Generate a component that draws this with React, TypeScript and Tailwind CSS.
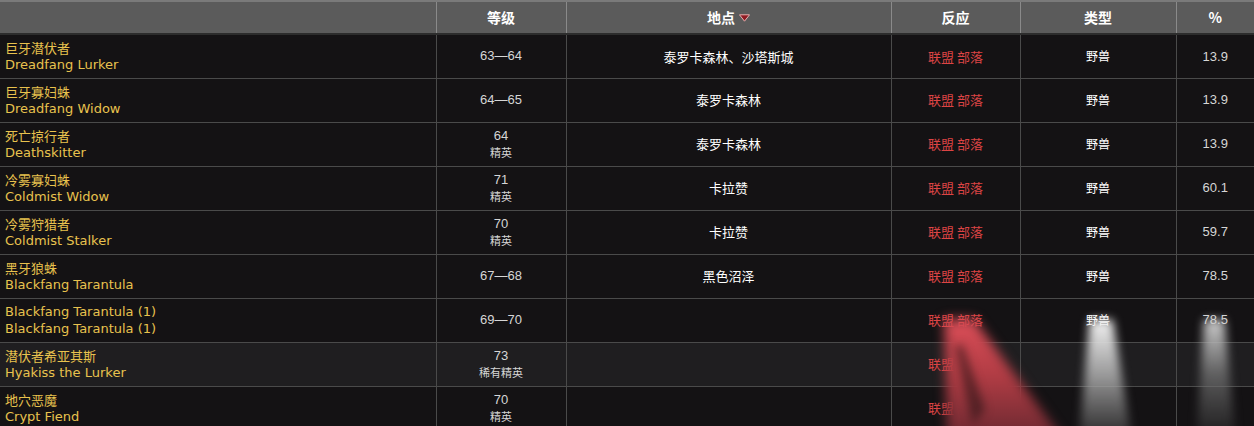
import React from "react";

type Row = {
  cn: string;
  en: string;
  level: string;
  tag?: string;
  zone?: string;
  reaction?: string;
  kind?: string;
  pct?: string;
  hl?: boolean;
};

const rows: Row[] = [
  { cn: "巨牙潜伏者", en: "Dreadfang Lurker", level: "63—64", zone: "泰罗卡森林、沙塔斯城", reaction: "联盟 部落", kind: "野兽", pct: "13.9" },
  { cn: "巨牙寡妇蛛", en: "Dreadfang Widow", level: "64—65", zone: "泰罗卡森林", reaction: "联盟 部落", kind: "野兽", pct: "13.9" },
  { cn: "死亡掠行者", en: "Deathskitter", level: "64", tag: "精英", zone: "泰罗卡森林", reaction: "联盟 部落", kind: "野兽", pct: "13.9" },
  { cn: "冷雾寡妇蛛", en: "Coldmist Widow", level: "71", tag: "精英", zone: "卡拉赞", reaction: "联盟 部落", kind: "野兽", pct: "60.1" },
  { cn: "冷雾狩猎者", en: "Coldmist Stalker", level: "70", tag: "精英", zone: "卡拉赞", reaction: "联盟 部落", kind: "野兽", pct: "59.7" },
  { cn: "黑牙狼蛛", en: "Blackfang Tarantula", level: "67—68", zone: "黑色沼泽", reaction: "联盟 部落", kind: "野兽", pct: "78.5" },
  { cn: "Blackfang Tarantula (1)", en: "Blackfang Tarantula (1)", level: "69—70", reaction: "联盟 部落", kind: "野兽", pct: "78.5" },
  { cn: "潜伏者希亚其斯", en: "Hyakiss the Lurker", level: "73", tag: "稀有精英", reaction: "联盟 部落", hl: true },
  { cn: "地穴恶魔", en: "Crypt Fiend", level: "70", tag: "精英", reaction: "联盟 部落" },
];

const cjk = "font-['Noto_Sans_CJK_SC',sans-serif]";
const latin = "font-['DejaVu_Sans','Noto_Sans_CJK_SC',sans-serif]";
const arial = "font-['Liberation_Sans','Noto_Sans_CJK_SC',sans-serif]";

function SortArrow() {
  return (
    <svg width="11" height="8" viewBox="0 0 11 8" className="ml-1 inline-block">
      <path d="M0.5 0.8 L10.5 0.8 L5.5 7.2 Z" fill="#8e1a22" stroke="#e8b0b0" strokeWidth="1" />
    </svg>
  );
}

export default function App() {
  const th = "h-[33px] border-l border-[#8a8a8a] text-center text-[14px] font-bold text-white";
  const td = "h-[44px] border-l border-b border-[#4a4a4a] text-center align-middle";

  return (
    <div className="relative h-[426px] w-[1254px] overflow-hidden bg-[#141214]">
      <table className="w-[1254px] table-fixed border-collapse">
        <colgroup>
          <col className="w-[436px]" />
          <col className="w-[130px]" />
          <col className="w-[325px]" />
          <col className="w-[129px]" />
          <col className="w-[156px]" />
          <col />
        </colgroup>
        <thead>
          <tr className={`border-t-2 border-[#7a7a7a] border-b-2 border-b-[#2c2c2c] bg-[#5b5b5b] ${cjk}`}>
            <th className="h-[33px] text-left" />
            <th className={th}>等级</th>
            <th className={th}>
              <span className="inline-flex items-center">
                地点
                <SortArrow />
              </span>
            </th>
            <th className={th}>反应</th>
            <th className={th}>类型</th>
            <th className={th}>%</th>
          </tr>
        </thead>
        <tbody>
          {rows.map((r, i) => (
            <tr key={i} className={r.hl ? "bg-[#1f1e20]" : "bg-[#141214]"}>
              <td className="h-[44px] border-b border-[#4a4a4a] pl-[5px] text-left align-middle text-[13px] leading-[17px] text-[#e8c24e]">
                <div className={r.cn.startsWith("Black") ? latin : cjk}>{r.cn}</div>
                <div className={latin}>{r.en}</div>
              </td>
              <td className={td}>
                <div className={`${arial} text-[13px] leading-[16px] text-[#d6d6d6]`}>{r.level}</div>
                {r.tag && <div className={`${cjk} text-[11px] leading-[16px] text-[#d6d6d6]`}>{r.tag}</div>}
              </td>
              <td className={`${td} ${cjk} text-[13px] text-white`}>{r.zone}</td>
              <td className={`${td} ${cjk} text-[13px] text-[#dc4444]`}>{r.reaction}</td>
              <td className={`${td} ${cjk} text-[12px] text-white`}>{r.kind}</td>
              <td className={`${td} ${arial} text-[13px] text-[#d6d6d6]`}>{r.pct}</td>
            </tr>
          ))}
        </tbody>
      </table>

      {/* light beams over the lower right corner */}
      <div className="pointer-events-none absolute left-[928px] top-[314px] h-[125px] w-[135px] blur-[6px]">
        <div className="h-full w-full bg-gradient-to-b from-[#e0505a] via-[#b03c44] to-[#6a2830] [clip-path:polygon(12%_4%,34%_4%,100%_100%,14%_100%)]" />
      </div>
      <div className="pointer-events-none absolute left-[955px] top-[345px] h-[80px] w-[30px] blur-[5px]">
        <div className="h-full w-full bg-[#2a1416]/60 [clip-path:polygon(0_0,25%_0,100%_80%,60%_100%)]" />
      </div>
      <div className="pointer-events-none absolute left-[1068px] top-[312px] h-[125px] w-[72px] blur-[5px]">
        <div className="h-full w-full bg-gradient-to-b from-[#ffffff] via-[#b0b0b0]/85 to-[#444444]/50 [clip-path:polygon(30%_6%,62%_6%,88%_100%,16%_100%)]" />
      </div>
      <div className="pointer-events-none absolute left-[1186px] top-[312px] h-[125px] w-[60px] blur-[5px]">
        <div className="h-full w-full bg-gradient-to-b from-[#dcdcdc] via-[#7a7a7a]/70 to-[#2e2e2e]/40 [clip-path:polygon(30%_6%,64%_6%,82%_100%,18%_100%)]" />
      </div>
    </div>
  );
}
